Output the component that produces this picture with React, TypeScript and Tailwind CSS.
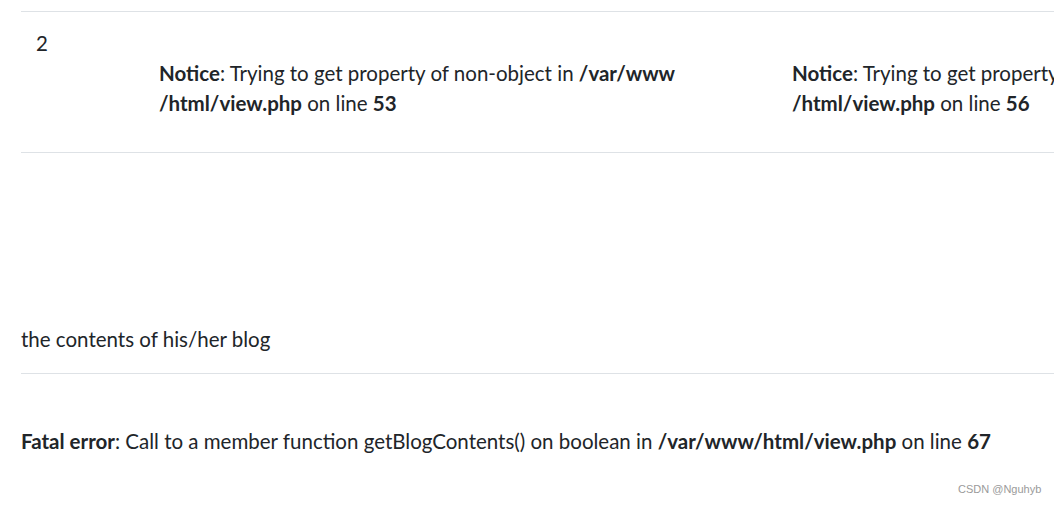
import React from 'react';

// PHP error page rendered in a Bootstrap-like table

function Notice({ line }: { line: number }) {
  return (
    <>
      <br />
      <b className="font-bold">Notice</b>: Trying to get property of non-object in{' '}
      <b className="font-bold">
        /var/www
        <wbr />
        /html/view.php
      </b>{' '}
      on line <b className="font-bold">{line}</b>
    </>
  );
}

export default function App() {
  return (
    <div className="relative w-[1054px] h-[505px] overflow-hidden bg-white text-[#212529] text-[20.5px] leading-[30px] font-['Lato','Noto_Sans',sans-serif]">
      <div className="pl-[21px] pt-[11px]">
        {/* table row */}
        <div className="w-[1300px] border-t border-b border-[#dee2e6] h-[142px] flex">
          <div className="w-[138px] shrink-0 pl-[15px] pt-[16px]">2</div>
          <div className="w-[633px] shrink-0 pt-[16px] pr-[100px]">
            <Notice line={53} />
          </div>
          <div className="w-[533px] shrink-0 pt-[16px]">
            <Notice line={56} />
          </div>
        </div>

        <div className="mt-[171px]">the contents of his/her blog</div>
        <div className="mt-[19px] w-[1100px] border-t border-[#dee2e6]" />
        <div className="mt-[52px] whitespace-nowrap">
          <b className="font-bold">Fatal error</b>: Call to a member function getBlogContents() on boolean in{' '}
          <b className="font-bold">/var/www/html/view.php</b> on line <b className="font-bold">67</b>
        </div>
      </div>

      <div className="absolute left-[958px] top-[481px] text-[11px] leading-[16px] text-[#9a9a9a] font-['Liberation_Sans',sans-serif]">
        CSDN @Nguhyb
      </div>
    </div>
  );
}
